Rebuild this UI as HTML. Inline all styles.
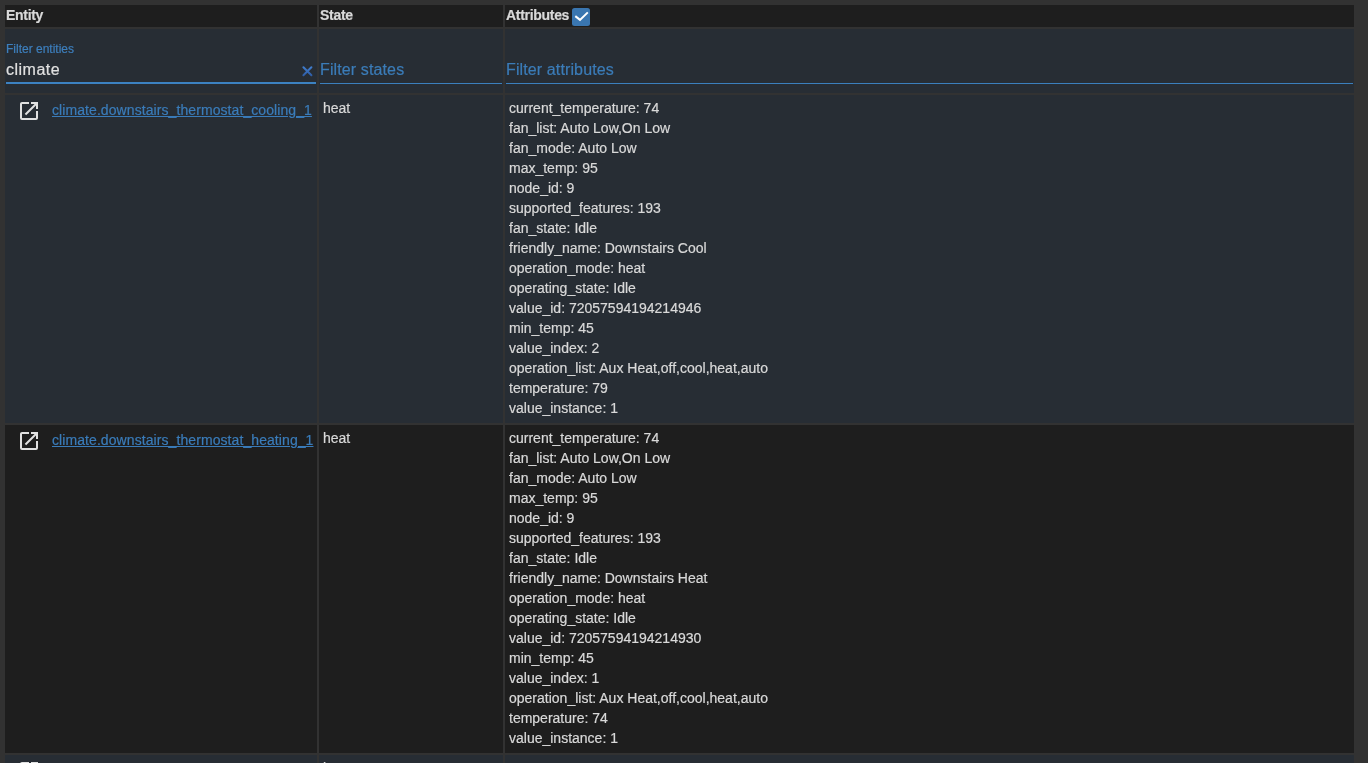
<!DOCTYPE html>
<html><head><meta charset="utf-8">
<style>
html,body{margin:0;padding:0;background:#323232;width:1368px;height:763px;overflow:hidden;}
body{font-family:"Liberation Sans",sans-serif;color:#d9d9d9;position:relative;-webkit-text-stroke:0.2px;}
.c{position:absolute;overflow:hidden;will-change:transform;}
.hd{background:#1e1e1e;top:5px;height:22px;}
.fl{background:#272d34;top:29px;height:64px;}
.r1{background:#272d34;top:95px;height:328px;}
.r2{background:#1e1e1e;top:425px;height:328px;}
.r3{background:#272d34;top:755px;height:328px;}
.e{left:5px;width:312px;}
.s{left:319px;width:184px;}
.a{left:505px;width:849px;}
.ht{position:absolute;top:2px;font-weight:bold;font-size:14px;line-height:16px;white-space:nowrap;letter-spacing:-0.3px;}
.lines{position:absolute;left:4px;top:3px;font-size:14px;line-height:20px;white-space:pre;}
.state{position:absolute;left:4px;top:3px;font-size:14px;line-height:20px;}
.link{position:absolute;left:47px;top:5px;font-size:14px;line-height:20px;color:#3a7cba;text-decoration:underline;white-space:nowrap;letter-spacing:0.08px;}
.lbl{position:absolute;top:13px;font-size:12px;line-height:14px;color:#3d7fbd;white-space:nowrap;}
.inp{position:absolute;top:31px;font-size:16px;line-height:20px;color:#e1e1e1;white-space:nowrap;letter-spacing:0.5px;}
.ph{position:absolute;top:31px;font-size:16px;line-height:20px;color:#3b7cb8;letter-spacing:0.12px;white-space:nowrap;}
.ul2{position:absolute;top:53px;height:2px;background:#3c82c2;}
.ul1{position:absolute;top:54px;height:1px;background:#3b7fbd;}
.icon{position:absolute;left:12px;top:4px;width:24px;height:24px;}
</style></head><body>
<div class="c hd e"><div class="ht" style="left:1px">Entity</div></div>
<div class="c hd s"><div class="ht" style="left:1px">State</div></div>
<div class="c hd a"><div class="ht" style="left:1px">Attributes</div>
<svg style="position:absolute;left:67px;top:3px" width="18" height="18" viewBox="0 0 18 18"><rect x="0" y="0" width="18" height="18" rx="2.5" fill="#3a76b0"/><path d="M3.3,8.1 L8,11.9 L15.8,4.4" fill="none" stroke="#fff" stroke-width="2"/></svg></div>

<div class="c fl e"><div class="lbl" style="left:1px">Filter entities</div><div class="inp" style="left:1px">climate</div>
<svg style="position:absolute;left:296px;top:36px" width="12" height="12" viewBox="0 0 12 12"><defs><linearGradient id="xg" x1="0" y1="0" x2="0" y2="1"><stop offset="0" stop-color="#3f7ccc"/><stop offset="1" stop-color="#2f5ea8"/></linearGradient></defs><path d="M2.4,2.3 L10.4,10.3 M10.4,2.3 L2.4,10.3" stroke="url(#xg)" stroke-width="2" stroke-linecap="round" fill="none"/></svg>
<div class="ul2" style="left:1px;width:310px"></div></div>
<div class="c fl s"><div class="ph" style="left:1px">Filter states</div><div class="ul1" style="left:1px;width:182px"></div></div>
<div class="c fl a"><div class="ph" style="left:1px">Filter attributes</div><div class="ul1" style="left:1px;width:847px"></div></div>

<div class="c r1 e">
<svg class="icon" viewBox="0 0 24 24"><path fill="#e1e1e1" d="M14,3V5H17.59L7.76,14.83L9.17,16.24L19,6.41V10H21V3M19,19H5V5H12V3H5C3.89,3 3,3.9 3,5V19A2,2 0 0,0 5,21H19A2,2 0 0,0 21,19V12H19V19Z"/></svg>
<div class="link">climate.downstairs_thermostat_cooling_1</div>
</div>
<div class="c r1 s"><div class="state">heat</div></div>
<div class="c r1 a"><div class="lines">current_temperature: 74
fan_list: Auto Low,On Low
fan_mode: Auto Low
max_temp: 95
node_id: 9
supported_features: 193
fan_state: Idle
friendly_name: Downstairs Cool
operation_mode: heat
operating_state: Idle
value_id: 72057594194214946
min_temp: 45
value_index: 2
operation_list: Aux Heat,off,cool,heat,auto
temperature: 79
value_instance: 1</div></div>

<div class="c r2 e">
<svg class="icon" viewBox="0 0 24 24"><path fill="#e1e1e1" d="M14,3V5H17.59L7.76,14.83L9.17,16.24L19,6.41V10H21V3M19,19H5V5H12V3H5C3.89,3 3,3.9 3,5V19A2,2 0 0,0 5,21H19A2,2 0 0,0 21,19V12H19V19Z"/></svg>
<div class="link">climate.downstairs_thermostat_heating_1</div>
</div>
<div class="c r2 s"><div class="state">heat</div></div>
<div class="c r2 a"><div class="lines">current_temperature: 74
fan_list: Auto Low,On Low
fan_mode: Auto Low
max_temp: 95
node_id: 9
supported_features: 193
fan_state: Idle
friendly_name: Downstairs Heat
operation_mode: heat
operating_state: Idle
value_id: 72057594194214930
min_temp: 45
value_index: 1
operation_list: Aux Heat,off,cool,heat,auto
temperature: 74
value_instance: 1</div></div>

<div class="c r3 e">
<svg class="icon" viewBox="0 0 24 24"><path fill="#e1e1e1" d="M14,3V5H17.59L7.76,14.83L9.17,16.24L19,6.41V10H21V3M19,19H5V5H12V3H5C3.89,3 3,3.9 3,5V19A2,2 0 0,0 5,21H19A2,2 0 0,0 21,19V12H19V19Z"/></svg>
</div>
<div class="c r3 s"><div class="state">heat</div></div>
<div class="c r3 a"></div>
</body></html>
